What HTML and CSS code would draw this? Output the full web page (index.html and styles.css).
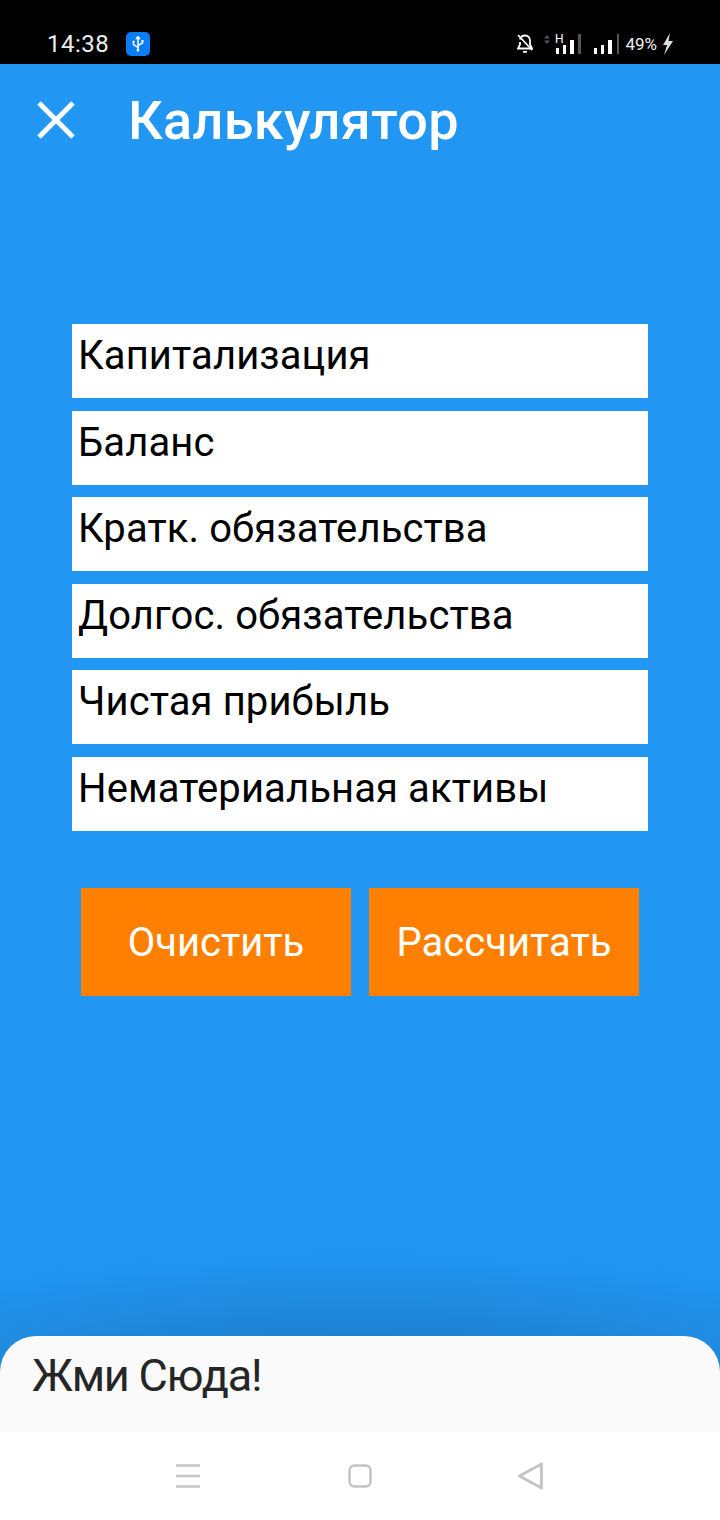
FILE: index.html
```html
<!DOCTYPE html>
<html lang="en">
<head>
    <meta charset="UTF-8">
    <meta name="viewport" content="width=device-width, initial-scale=1.0">
    <title>Калькулятор</title>
    <link rel="stylesheet" href="styles.css">
</head>
<body>
    <div class="status-bar">
        <div class="status-left">
            <span class="clock">14:38</span>
            <span class="usb-badge">
                <svg width="14" height="16" viewBox="0 0 14 16" fill="none" stroke="#fff" stroke-width="1.500">
                    <path d="M7 1V14.500M7 11.500L2.500 8.500V6M7 9.500L11.500 7V5.500"/>
                    <path d="M7 .5L5.600 2.600H8.400Z" fill="#fff"/>
                    <circle cx="2.500" cy="5.500" r="1.100" fill="#fff" stroke="none"/>
                    <rect x="10.500" y="4" width="2" height="2" fill="#fff" stroke="none"/>
                    <circle cx="7" cy="14.300" r="1.300" fill="#fff" stroke="none"/>
                </svg>
            </span>
        </div>
        <div class="status-right">
            <svg class="bell" width="16" height="20" viewBox="0 0 16 20" fill="none" stroke="#fff" stroke-width="1.800">
                <path d="M3 5.500C3.500 3 5.500 1.500 8 1.500C11 1.500 13 3.700 13 6.700V10.500L15 14.500H1L3 10.500V8"/>
                <path d="M6 17.800H10"/>
                <path d="M1 1L15 16"/>
            </svg>
            <svg class="data-arrows" width="6" height="9" viewBox="0 0 6 9" fill="#555">
                <path d="M3 0L6 3.500H0Z"/>
                <path d="M3 9L0 5.500H6Z"/>
            </svg>
            <svg class="signal-one" width="26" height="28" viewBox="0 -4 26 28">
                <text x="0" y="9" class="signal-h">H</text>
                <rect x="1" y="14" width="3" height="6" fill="#fff"/>
                <rect x="8" y="11" width="3" height="9" fill="#fff"/>
                <rect x="15" y="6" width="4" height="14" fill="#fff"/>
                <rect x="23" y="0" width="3" height="20" fill="#555"/>
            </svg>
            <svg class="signal-two" width="25" height="20" viewBox="0 0 25 20">
                <rect x="0" y="14" width="3" height="6" fill="#fff"/>
                <rect x="7" y="11" width="3" height="9" fill="#fff"/>
                <rect x="14" y="6" width="4" height="14" fill="#fff"/>
                <rect x="23" y="0" width="2" height="20" fill="#555"/>
            </svg>
            <span class="battery">49%</span>
            <svg class="bolt" width="11" height="22" viewBox="0 0 11 22" fill="#ddd">
                <path d="M8 0L1 12H5L2 22L11 8H6.500Z"/>
            </svg>
        </div>
    </div>

    <div class="screen">
        <div class="app-bar">
            <svg class="close-icon" width="38" height="38" viewBox="0 0 38 38" fill="none" stroke="#fff" stroke-width="5">
                <path d="M2 2L36 36M36 2L2 36"/>
            </svg>
            <h1 class="title">Калькулятор</h1>
        </div>

        <div class="form">
            <div class="field">Капитализация</div>
            <div class="field">Баланс</div>
            <div class="field">Кратк. обязательства</div>
            <div class="field">Долгос. обязательства</div>
            <div class="field">Чистая прибыль</div>
            <div class="field">Нематериальная активы</div>
        </div>

        <div class="buttons">
            <div class="btn">Очистить</div>
            <div class="btn">Рассчитать</div>
        </div>

        <div class="ad-shadow"></div>
        <div class="ad-sheet">Жми Сюда!</div>
    </div>

    <div class="nav-bar">
        <svg width="26" height="24" viewBox="0 0 26 24" fill="none" stroke="#c4c4c4" stroke-width="2.500">
            <path d="M0 1.500H24M0 12H24M0 22.500H24"/>
        </svg>
        <svg width="24" height="24" viewBox="0 0 24 24" fill="none" stroke="#c4c4c4" stroke-width="2.500">
            <rect x="1.500" y="1.500" width="21" height="21" rx="5"/>
        </svg>
        <svg width="28" height="28" viewBox="0 0 28 28" fill="none" stroke="#c4c4c4" stroke-width="2.800" stroke-linejoin="round">
            <path d="M23.500 2V26L1.500 14Z"/>
        </svg>
    </div>
</body>
</html>
```

FILE: styles.css
```css
body{
    margin: 0;
    padding: 0;
    width: 720px;
    height: 1520px;
    overflow: hidden;
    font-family: Roboto, "Noto Sans", sans-serif;
    background-color: white;
}
.status-bar{
    display: flex;
    justify-content: space-between;
    align-items: center;
    box-sizing: border-box;
    height: 64px;
    padding: 24px 47px 0 47px;
    background-color: black;
    color: white;
}
.status-left{
    display: flex;
    align-items: center;
    gap: 17px;
}
.clock{
    font-size: 24px;
    letter-spacing: 0.5px;
    color: #eee;
}
.usb-badge{
    display: flex;
    justify-content: center;
    align-items: center;
    width: 24px;
    height: 24px;
    border-radius: 5px;
    background-color: #0a7cf5;
}
.status-right{
    display: flex;
    align-items: center;
}
.bell{
    margin-right: 11px;
}
.data-arrows{
    margin-right: 5px;
    margin-bottom: 10px;
}
.signal-one{
    margin-right: 13px;
}
.signal-two{
    margin-right: 6px;
}
.signal-h{
    font-family: Roboto, sans-serif;
    font-size: 12px;
    fill: #fff;
}
.battery{
    font-size: 17px;
    color: #eee;
}
.bolt{
    margin-left: 5px;
}
.screen{
    position: relative;
    box-sizing: border-box;
    height: 1368px;
    background-color: #2196f3;
}
.app-bar{
    display: flex;
    align-items: center;
    height: 112px;
    padding-left: 37px;
}
.close-icon{
    margin-right: 53px;
}
.title{
    margin: 0;
    font-size: 54px;
    font-weight: 500;
    letter-spacing: 0.3px;
    color: white;
}
.form{
    display: flex;
    flex-direction: column;
    gap: 12.500px;
    margin: 148px 72px 0;
}
.field{
    box-sizing: border-box;
    height: 74px;
    padding: 8px 6px 0;
    background-color: white;
    font-size: 40px;
    line-height: 47px;
    letter-spacing: 0.1px;
    color: black;
}
.buttons{
    display: flex;
    gap: 18px;
    margin: 57px 81px 0;
}
.btn{
    display: flex;
    justify-content: center;
    align-items: center;
    box-sizing: border-box;
    width: 270px;
    height: 108px;
    padding-top: 2px;
    background-color: #ff8000;
    font-size: 40px;
    color: white;
}
.ad-shadow{
    position: absolute;
    left: 0;
    right: 0;
    bottom: 60px;
    height: 120px;
    background: radial-gradient(ellipse 85% 100% at 50% 100%, rgba(0,0,0,0.2), rgba(0,0,0,0));
}
.ad-sheet{
    position: absolute;
    left: 0;
    right: 0;
    bottom: 0;
    box-sizing: border-box;
    height: 96px;
    padding: 12px 32px 0;
    border-radius: 36px 36px 0 0;
    background-color: #fafafa;
    font-size: 45px;
    line-height: 56px;
    letter-spacing: -1.200px;
    color: #262626;
}
.nav-bar{
    display: flex;
    justify-content: space-between;
    align-items: center;
    box-sizing: border-box;
    height: 88px;
    padding: 0 174px 0 176px;
    background-color: white;
}
```
